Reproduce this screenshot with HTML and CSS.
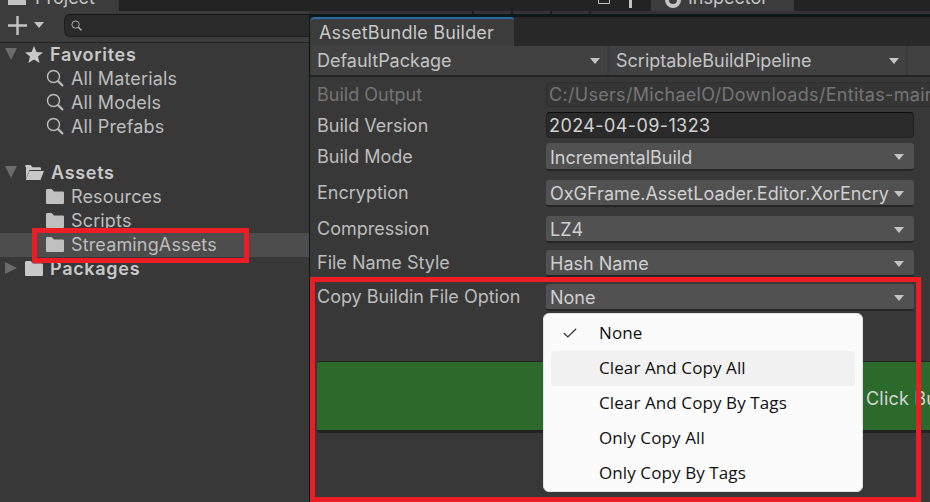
FILE: index.html
```html
<!DOCTYPE html>
<html lang="en">
<head>
    <meta charset="UTF-8">
    <meta name="viewport" content="width=device-width, initial-scale=1.0">
    <title>AssetBundle Builder</title>
    <link rel="stylesheet" href="styles.css">
</head>
<body>
    <svg class="defs" width="0" height="0">
        <symbol id="mag" viewBox="0 0 18 18">
            <circle cx="7.5" cy="7.5" r="6" fill="none" stroke="currentColor" stroke-width="1.4"/>
            <path d="M12 12l5 5" fill="none" stroke="currentColor" stroke-width="2.2"/>
        </symbol>
        <symbol id="folder" viewBox="0 0 18 16">
            <path d="M0 2.5C0 1.5.5 1 1.5 1h4.2l2.3 2.6h8.5c1 0 1.5.5 1.5 1.5v9.4c0 1-.5 1.5-1.5 1.5h-15C.5 16 0 15.500 0 14.500z" fill="currentColor"/>
        </symbol>
    </svg>

    <div class="app">
        <div class="project">
            <div class="tabstrip">
                <div class="project-tab">
                    <span class="tab-icon"></span>
                    <span class="tab-label">Project</span>
                </div>
            </div>
            <div class="toolbar">
                <svg class="plus" width="19" height="19" viewBox="0 0 19 19"><path d="M9.500 0v19M0 9.500h19" stroke="#c4c4c4" stroke-width="2.400"/></svg>
                <span class="caret small"></span>
                <div class="search">
                    <svg width="11" height="11"><use href="#mag"/></svg>
                </div>
            </div>
            <ul class="tree">
                <li class="tree-row head">
                    <span class="arrow down"></span>
                    <svg class="star" width="18" height="17" viewBox="0 0 18 17"><path d="M9 0l2.500 5.900 6.500.5-5 4.200 1.600 6.400L9 13.600 3.400 17 5 10.600 0 6.400l6.500-.5z" fill="#c8c8c8"/></svg>
                    Favorites
                </li>
                <li class="tree-row child"><svg class="ico" width="18" height="18"><use href="#mag"/></svg>All Materials</li>
                <li class="tree-row child"><svg class="ico" width="18" height="18"><use href="#mag"/></svg>All Models</li>
                <li class="tree-row child"><svg class="ico" width="18" height="18"><use href="#mag"/></svg>All Prefabs</li>
                <li class="tree-row head assets">
                    <span class="arrow down"></span>
                    <svg class="star" width="19" height="15" viewBox="0 0 19 15"><path d="M0 1.500C0 .5.5 0 1.500 0h4l2 2.300h7c1 0 1.500.5 1.500 1.500V5H4.500L1.300 13H1V2zM4.500 6H19l-3.500 9H.8z" fill="#c8c8c8"/></svg>
                    Assets
                </li>
                <li class="tree-row child"><svg class="ico" width="18" height="16"><use href="#folder"/></svg>Resources</li>
                <li class="tree-row child"><svg class="ico" width="18" height="16"><use href="#folder"/></svg>Scripts</li>
                <li class="tree-row child selected"><svg class="ico" width="18" height="16"><use href="#folder"/></svg>StreamingAssets</li>
                <li class="tree-row head">
                    <span class="arrow right"></span>
                    <svg class="star" width="18" height="16"><use href="#folder"/></svg>
                    Packages
                </li>
            </ul>
        </div>

        <div class="main">
            <div class="main-strip">
                <svg class="win-ico" width="12" height="11" viewBox="0 0 12 11"><path d="M.5 0v3.500h11V0" fill="none" stroke="#c4c4c4"/></svg>
                <span class="dots"></span>
                <div class="inspector-tab">
                    <span class="info-ico"></span>
                    <span class="tab-label">Inspector</span>
                </div>
            </div>
            <div class="strip-line"><div class="strip-ticks"></div></div>
            <div class="builder">
                <div class="builder-tabs">
                    <div class="builder-tab">AssetBundle Builder</div>
                </div>
                <div class="topbar">
                    <div class="top-drop first">DefaultPackage<span class="caret"></span></div>
                    <div class="top-drop second">ScriptableBuildPipeline<span class="caret"></span></div>
                    <div class="top-drop third"></div>
                </div>
                <div class="form">
                    <label class="muted">Build Output</label>
                    <div class="text-field disabled">C:/Users/MichaelO/Downloads/Entitas-main/Bundles</div>

                    <label class="low">Build Version</label>
                    <div class="text-field version">2024-04-09-1323</div>

                    <label class="low">Build Mode</label>
                    <div class="select tall">IncrementalBuild<span class="caret"></span></div>

                    <label>Encryption</label>
                    <div class="select">OxGFrame.AssetLoader.Editor.XorEncry<span class="caret"></span></div>

                    <label>Compression</label>
                    <div class="select">LZ4<span class="caret"></span></div>

                    <label>File Name Style</label>
                    <div class="select">Hash Name<span class="caret"></span></div>

                    <label>Copy Buildin File Option</label>
                    <div class="select">None<span class="caret"></span></div>
                </div>
                <div class="build-btn">Click Build</div>
            </div>
        </div>
    </div>

    <div class="mark mark-tree"></div>
    <div class="mark mark-form"></div>

    <div class="menu">
        <div class="menu-item">
            <svg class="check" width="14" height="10" viewBox="0 0 14 10"><path d="M.8 5l4 4L13.200.8" fill="none" stroke="#333" stroke-width="1.200"/></svg>
            None
        </div>
        <div class="menu-item hover">Clear And Copy All</div>
        <div class="menu-item">Clear And Copy By Tags</div>
        <div class="menu-item">Only Copy All</div>
        <div class="menu-item">Only Copy By Tags</div>
    </div>
</body>
</html>
```

FILE: styles.css
```css
* {
    box-sizing: border-box;
}
html, body {
    margin: 0;
    height: 100%;
    overflow: hidden;
    background: #383838;
}
body {
    font-family: Inter, "Liberation Sans", sans-serif;
    font-size: 18px;
    color: #c4c4c4;
    position: relative;
}
.defs {
    position: absolute;
}
.app {
    display: flex;
    height: 502px;
    width: 930px;
    overflow: hidden;
}

/* project panel */
.project {
    width: 309px;
    flex: none;
    background: #383838;
}
.tabstrip {
    height: 11px;
    background: #232323;
    overflow: hidden;
}
.project-tab {
    width: 119px;
    height: 11px;
    background: #3c3c3c;
    display: flex;
    gap: 9px;
    padding-left: 8px;
    overflow: hidden;
}
.tab-icon {
    width: 18px;
    height: 5px;
    background: #c4c4c4;
    flex: none;
}
.tab-label {
    line-height: 18px;
    margin-top: -11px;
    white-space: nowrap;
}
.toolbar {
    height: 32px;
    background: #3c3c3c;
    border-bottom: 1px solid #232323;
    display: flex;
    align-items: center;
    padding: 0 0 3px 8px;
}
.plus {
    flex: none;
}
.caret {
    width: 0;
    height: 0;
    border-left: 5px solid transparent;
    border-right: 5px solid transparent;
    border-top: 6px solid #c4c4c4;
    flex: none;
}
.caret.small {
    margin-left: 7px;
}
.search {
    margin-left: 20px;
    flex: 1;
    height: 23px;
    background: #2a2a2a;
    border: 1px solid #1f1f1f;
    border-top-color: #141414;
    border-right: 0;
    border-radius: 6px 0 0 6px;
    display: flex;
    align-items: center;
    padding-left: 6px;
    color: #c4c4c4;
}
.tree {
    list-style: none;
    margin: 0;
    padding: 0;
    height: 459px;
}
.tree-row {
    height: 24px;
    display: flex;
    align-items: center;
    padding-bottom: 2px;
    white-space: nowrap;
    letter-spacing: 0.15px;
    color: #bdbdbd;
}
.tree-row.head {
    font-weight: 600;
    color: #c8c8c8;
    padding-left: 5px;
    letter-spacing: 0.7px;
}
.tree-row.assets {
    margin-top: 22px;
}
.tree-row.child {
    padding-left: 46px;
}
.tree-row.selected {
    background: #4d4d4d;
}
.tree-row .ico {
    margin-right: 7px;
    color: #c0c0c0;
    flex: none;
}
.star {
    margin: 0 7px 0 8px;
    color: #c8c8c8;
    flex: none;
}
.arrow {
    width: 0;
    height: 0;
    flex: none;
}
.arrow.down {
    border-left: 6px solid transparent;
    border-right: 6px solid transparent;
    border-top: 12px solid #6b6b6b;
}
.arrow.right {
    border-top: 6px solid transparent;
    border-bottom: 6px solid transparent;
    border-left: 12px solid #6b6b6b;
}

/* right side */
.main {
    flex: 1;
    min-width: 0;
    background: #0e1819;
}
.main-strip {
    height: 11px;
    display: flex;
    overflow: hidden;
    background: #232323;
}
.win-ico {
    margin-left: 289px;
    flex: none;
}
.dots {
    width: 3px;
    height: 8px;
    background: #c4c4c4;
    margin-left: 19px;
    flex: none;
}
.inspector-tab {
    margin-left: 19px;
    width: 143px;
    height: 11px;
    background: #3c3c3c;
    display: flex;
    gap: 7px;
    padding-left: 14px;
    overflow: hidden;
    flex: none;
}
.info-ico {
    width: 16px;
    height: 16px;
    margin-top: -8px;
    border-radius: 50%;
    border: 4px solid #c4c4c4;
    flex: none;
}
.strip-line {
    height: 3px;
    background: #333333;
}
.strip-ticks {
    margin-left: 163px;
    width: 130px;
    height: 3px;
    background: repeating-linear-gradient(90deg, #1d1d1d 0 2px, #333333 2px 39px);
}
.builder {
    height: 485px;
    margin-top: 3px;
    background: #383838;
    overflow: hidden;
    border-left: 1px solid #0e1819;
}
.builder-tabs {
    height: 29px;
    background: #282828;
}
.builder-tab {
    width: 204px;
    height: 29px;
    background: #3c3c3c;
    border-top: 2px solid #2c6aa5;
    border-top-left-radius: 5px;
    border-top-right-radius: 3px;
    padding-left: 9px;
    line-height: 27px;
    letter-spacing: 0.2px;
    color: #c8c8c8;
}
.topbar {
    height: 31px;
    display: flex;
    gap: 3px;
    background: #3c3c3c;
    border-bottom: 2px solid #232323;
    padding-left: 1px;
    letter-spacing: 0;
}
.top-drop {
    height: 29px;
    background: #414141;
    display: flex;
    align-items: center;
    justify-content: space-between;
    padding: 0 7px 0 6px;
    white-space: nowrap;
    flex: none;
}
.top-drop.first,
.top-drop.second {
    width: 296px;
}
.top-drop.second {
    padding-left: 6px;
}
.top-drop.third {
    width: 40px;
    margin-left: -1px;
}
.form {
    display: grid;
    grid-template-columns: 229px 368px;
    grid-template-rows: 30px 31px 37px 36px 34px 34px 30px;
    padding: 5px 0 0 7px;
}
.form label {
    line-height: 26px;
    white-space: nowrap;
    color: #bdbdbd;
}
.form label.low {
    padding-top: 1px;
}
.form label.muted {
    color: #757575;
}
.text-field {
    height: 25px;
    width: 400px;
    border-radius: 4px;
    padding: 0 2px;
    line-height: 24px;
    white-space: nowrap;
    overflow: hidden;
}
.text-field.disabled {
    background: #353535;
    border: 1px solid #2f2f2f;
    color: #757575;
    letter-spacing: 0.3px;
}
.text-field.version {
    width: 368px;
    height: 26px;
    background: #2a2a2a;
    border: 1px solid #212121;
    border-top-color: #0d0d0d;
    color: #d2d2d2;
    line-height: 26px;
    letter-spacing: 0.4px;
}
.select {
    height: 27px;
    background: #515151;
    border-radius: 3px;
    border-bottom: 2px solid #262626;
    display: flex;
    align-items: center;
    justify-content: space-between;
    padding: 2px 10px 0 4px;
    white-space: nowrap;
    color: #d0d0d0;
}
.select.tall {
    height: 28px;
}
.build-btn {
    width: 1200px;
    height: 72px;
    margin: 47px 0 0 7px;
    background: #2b6a2b;
    border-top: 1px solid #232323;
    border-bottom: 3px solid #232323;
    border-radius: 3px;
    line-height: 74px;
    padding-left: 549px;
    color: #d6d6d6;
    letter-spacing: 0.2px;
}

/* annotations and popup lie over the editor */
.mark {
    position: absolute;
    border: 5px solid #ee1c25;
}
.mark-tree {
    left: 32px;
    top: 228px;
    width: 217px;
    height: 35px;
}
.mark-form {
    left: 310px;
    top: 277px;
    width: 611px;
    height: 225px;
}
.menu {
    position: absolute;
    left: 543px;
    top: 313px;
    width: 320px;
    height: 179px;
    padding: 2px 7px 0;
    background: #fbfbfb;
    border: 1px solid #e2e2e2;
    border-radius: 6px;
    font-family: "Open Sans", "Noto Sans", sans-serif;
    font-size: 17px;
    letter-spacing: 0.1px;
    color: #101010;
}
.menu-item {
    height: 35px;
    padding-left: 48px;
    line-height: 34px;
    position: relative;
    border-radius: 4px;
}
.menu-item.hover {
    background: #f1f1f1;
}
.check {
    position: absolute;
    left: 12px;
    top: 12px;
}
```
